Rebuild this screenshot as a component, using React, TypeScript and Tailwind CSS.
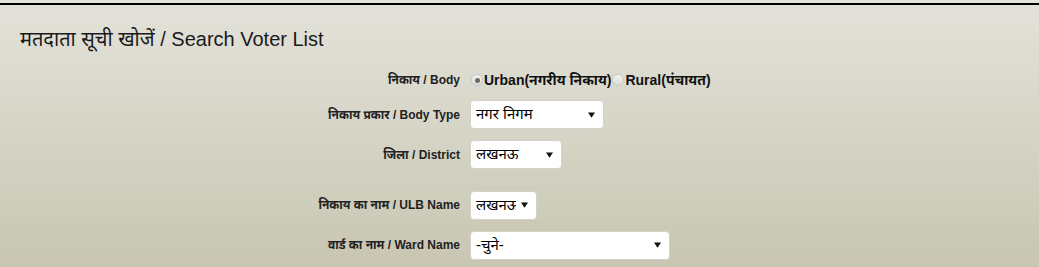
import { useState } from 'react'

const font = "font-[family-name:'Liberation_Sans','Noto_Sans_Devanagari','Noto_Sans',sans-serif]"

function Arrow() {
  return (
    <svg viewBox="0 0 8 6" className="pointer-events-none absolute right-[9px] top-1/2 -mt-[3px] h-[6px] w-[7px]">
      <path d="M0 0 H8 L4 6 Z" fill="#111" />
    </svg>
  )
}

function Select({ width, value, options }: { width: string; value: string; options: string[] }) {
  return (
    <div className={`relative ${width}`}>
      <select
        defaultValue={value}
        className={`h-[29px] w-full appearance-none rounded-[4px] border border-[#d3d3cc] bg-white pl-[5px] pr-5 text-[15px] text-black outline-none ${font}`}
      >
        {options.map((o) => (
          <option key={o}>{o}</option>
        ))}
      </select>
      <Arrow />
    </div>
  )
}

function Radio({ checked, onClick }: { checked: boolean; onClick: () => void }) {
  return (
    <span
      onClick={onClick}
      className="mx-[1px] inline-flex h-[12px] w-[12px] cursor-pointer items-center justify-center rounded-full border border-[#c9c9c2] bg-gradient-to-b from-[#f3f3f0] to-[#dcdcd6]"
    >
      {checked && <span className="h-[5px] w-[5px] rounded-full bg-[#6a6a6a]" />}
    </span>
  )
}

function Row({ label, children, className }: { label: string; children: React.ReactNode; className: string }) {
  return (
    <div className={`flex items-center ${className}`}>
      <label className="w-[460px] text-right text-[12px] font-bold text-[#222]">{label}</label>
      <div className="ml-[10px] flex items-center">{children}</div>
    </div>
  )
}

export default function App() {
  const [body, setBody] = useState<'urban' | 'rural'>('urban')

  return (
    <div className={`min-h-screen bg-[#e4e3dc] pt-[3px] ${font}`}>
      <div className="h-[264px] border-t-2 border-black bg-gradient-to-b from-[#e3e2da] to-[#c8c6b1]">
        <h2 className="pl-[20px] pt-[21px] text-[20px] leading-[26px] text-[#1a1a1a]">
          मतदाता सूची खोजें / Search Voter List
        </h2>

        <Row label="निकाय / Body" className="mt-[16px] h-[24px]">
          <Radio checked={body === 'urban'} onClick={() => setBody('urban')} />
          <span className="text-[14px] font-bold text-[#111]">Urban(नगरीय निकाय)</span>
          <Radio checked={body === 'rural'} onClick={() => setBody('rural')} />
          <span className="text-[14px] font-bold text-[#111]">Rural(पंचायत)</span>
        </Row>

        <Row label="निकाय प्रकार / Body Type" className="mt-[8px] h-[29px]">
          <Select width="w-[134px]" value="नगर निगम" options={['नगर निगम', 'नगर पालिका परिषद', 'नगर पंचायत']} />
        </Row>

        <Row label="जिला / District" className="mt-[11px] h-[29px]">
          <Select width="w-[92px]" value="लखनऊ" options={['लखनऊ']} />
        </Row>

        <Row label="निकाय का नाम / ULB Name" className="mt-[22px] h-[28px]">
          <Select width="w-[67px]" value="लखनऊ" options={['लखनऊ']} />
        </Row>

        <Row label="वार्ड का नाम / Ward Name" className="mt-[12px] h-[28px]">
          <Select width="w-[200px]" value="-चुने-" options={['-चुने-']} />
        </Row>
      </div>
    </div>
  )
}
